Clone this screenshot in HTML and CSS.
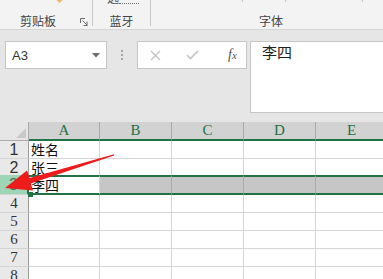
FILE: index.html
```html
<!DOCTYPE html>
<html>
<head>
  <meta name="viewport" content="width=device-width, initial-scale=1.0">
  <link rel="stylesheet" href="styles.css">
</head>
<body>
  <div class="page">
    <div class="ribbon">
      <div class="group g-clip">
        <div class="group-top"><span class="diamond"></span></div>
        <div class="group-foot">
          <span class="label">剪贴板</span>
          <svg class="launcher" width="8" height="8" viewBox="0 0 8 8">
            <path d="M0.5 5V0.5H5" fill="none" stroke="#6b6b6b"/>
            <path d="M2.5 2.5L7 7M7 3.5V7.5M3.5 7.5H7.5" fill="none" stroke="#6b6b6b"/>
          </svg>
        </div>
      </div>
      <div class="group g-bt">
        <div class="group-top peek"><span class="peek-text">选</span><span class="peek-dots"></span></div>
        <div class="group-foot center"><span class="label">蓝牙</span></div>
      </div>
      <div class="group g-font">
        <div class="group-top ticks"><span class="tick t1"></span><span class="tick t2"></span><span class="tick t3"></span></div>
        <div class="group-foot"><span class="label font-label">字体</span></div>
      </div>
    </div>

    <div class="formula-row">
      <div class="namebox">
        <span>A3</span>
        <svg width="8" height="5" viewBox="0 0 8 5"><path d="M0 0H8L4 4.5Z" fill="#6f6f6f"/></svg>
      </div>
      <div class="grip"><span></span><span></span><span></span></div>
      <div class="fx-buttons">
        <svg class="btn-x" width="11" height="11" viewBox="0 0 11 11">
          <path d="M1 1L10 10M10 1L1 10" stroke="#c4c4c4" stroke-width="1.4"/>
        </svg>
        <svg class="btn-ok" width="13" height="10" viewBox="0 0 13 10">
          <path d="M1 5L4.5 8.5L12 1" fill="none" stroke="#c4c4c4" stroke-width="1.6"/>
        </svg>
        <span class="btn-fx"><i>f</i><i class="fx-x">x</i></span>
      </div>
      <div class="formula-box">李四</div>
    </div>

    <div class="sheet">
      <div class="corner"><span class="corner-tri"></span></div>
      <div class="col-head">A</div>
      <div class="col-head">B</div>
      <div class="col-head">C</div>
      <div class="col-head">D</div>
      <div class="col-head">E</div>

      <div class="row-head sans">1</div>
      <div class="cell">姓名</div>
      <div class="cell"></div>
      <div class="cell"></div>
      <div class="cell"></div>
      <div class="cell"></div>

      <div class="row-head sans r2">2</div>
      <div class="cell r2">张三</div>
      <div class="cell r2"></div>
      <div class="cell r2"></div>
      <div class="cell r2"></div>
      <div class="cell r2"></div>

      <div class="row-head sans sel-head">3</div>
      <div class="cell sel active">李四<span class="fill-handle"></span></div>
      <div class="cell sel"></div>
      <div class="cell sel"></div>
      <div class="cell sel"></div>
      <div class="cell sel"></div>

      <div class="row-head">4</div>
      <div class="cell"></div><div class="cell"></div><div class="cell"></div><div class="cell"></div><div class="cell"></div>
      <div class="row-head">5</div>
      <div class="cell"></div><div class="cell"></div><div class="cell"></div><div class="cell"></div><div class="cell"></div>
      <div class="row-head">6</div>
      <div class="cell"></div><div class="cell"></div><div class="cell"></div><div class="cell"></div><div class="cell"></div>
      <div class="row-head">7</div>
      <div class="cell"></div><div class="cell"></div><div class="cell"></div><div class="cell"></div><div class="cell"></div>
      <div class="row-head">8</div>
      <div class="cell"></div><div class="cell"></div><div class="cell"></div><div class="cell"></div><div class="cell"></div>
    </div>

    <!-- annotation arrow drawn over the sheet -->
    <svg class="arrow" width="383" height="279" viewBox="0 0 383 279">
      <polygon points="114,154.3 29.6,177.9 27,170.6 5,188 33,190.6 30.8,183.4 114,155.4" fill="#ee1b1b"/>
    </svg>
  </div>
</body>
</html>
```

FILE: styles.css
```css
* {
  box-sizing: border-box;
}
body {
  margin: 0;
  background: #e6e6e6;
}
.page {
  position: relative;
  width: 383px;
  height: 279px;
  overflow: hidden;
  background: #e6e6e6;
  font-family: "Noto Sans CJK SC", "Liberation Sans", sans-serif;
  color: #222;
}

/* ribbon */
.ribbon {
  display: flex;
  height: 30px;
  background: #f3f3f3;
  border-bottom: 1px solid #d5d5d5;
}
.group {
  height: 26px;
  display: flex;
  flex-direction: column;
  border-right: 1px solid #c8c8c8;
}
.g-clip {
  width: 93px;
}
.g-bt {
  width: 58px;
}
.g-font {
  flex: 1;
  border-right: none;
}
.group-top {
  height: 13px;
  overflow: hidden;
}
.diamond {
  display: block;
  width: 5px;
  height: 5px;
  margin: -3px 0 0 57px;
  background: #f2b866;
  transform: rotate(45deg);
}
.peek {
  display: flex;
  align-items: flex-end;
  height: 5px;
  margin-bottom: 8px;
  padding-left: 14px;
}
.peek-text {
  font-size: 12px;
  line-height: 14px;
  color: #555;
}
.peek-dots {
  width: 20px;
  margin-bottom: 1px;
  border-bottom: 1px dotted #666;
}
.ticks {
  display: flex;
  align-items: flex-start;
}
.tick {
  width: 1px;
  height: 2px;
  background: #c8c8c8;
}
.t1 {
  margin-left: 91px;
}
.t2 {
  margin-left: 42px;
}
.t3 {
  margin-left: 76px;
}
.group-foot {
  display: flex;
  align-items: flex-start;
  height: 13px;
}
.group-foot.center {
  justify-content: center;
}
.label {
  font-size: 12px;
  line-height: 15px;
  color: #444;
}
.g-clip .label {
  margin-left: 20px;
}
.launcher {
  margin-left: auto;
  margin-right: 4px;
  align-self: flex-end;
}
.font-label {
  margin-left: 108px;
}

/* name box + formula bar */
.formula-row {
  display: flex;
  align-items: flex-start;
  height: 92px;
  padding: 11px 0 0 5px;
}
.namebox {
  width: 102px;
  height: 28px;
  display: flex;
  align-items: center;
  justify-content: space-between;
  padding: 0 6px;
  background: #fff;
  border: 1px solid #c6c6c6;
  font-family: "Liberation Sans", sans-serif;
  font-size: 13px;
  color: #333;
}
.grip {
  width: 30px;
  height: 28px;
  display: flex;
  flex-direction: column;
  align-items: center;
  justify-content: center;
  gap: 2px;
}
.grip span {
  width: 2px;
  height: 2px;
  background: #a6a6a6;
}
.fx-buttons {
  width: 110px;
  height: 28px;
  display: flex;
  align-items: center;
  padding-left: 12px;
  background: #fff;
  border: 1px solid #c6c6c6;
}
.btn-ok {
  margin-left: 25px;
}
.btn-fx {
  margin-left: 29px;
  font-family: "Liberation Serif", serif;
  font-size: 14px;
  color: #555;
}
.fx-x {
  font-size: 11px;
}
.formula-box {
  flex: 1;
  height: 72px;
  margin-left: 3px;
  padding-left: 11px;
  background: #fff;
  border: 1px solid #c6c6c6;
  border-right: none;
  font-size: 15px;
  line-height: 20px;
  color: #222;
}

/* sheet grid */
.sheet {
  display: grid;
  grid-template-columns: 29px 71px 72px 72px 72px 72px;
  grid-template-rows: 19px 18px 16px 20px repeat(5, 18px);
  width: 388px;
  background: #fff;
}
.corner {
  position: relative;
  background: #e6e6e6;
  border-right: 1px solid #ababab;
  border-bottom: 1px solid #ababab;
}
.corner-tri {
  position: absolute;
  right: 2px;
  bottom: 2px;
  width: 0;
  height: 0;
  border-left: 10px solid transparent;
  border-bottom: 10px solid #c9c9c9;
}
.col-head {
  background: #d2d2d2;
  border-right: 1px solid #ababab;
  border-bottom: 2px solid #217346;
  text-align: center;
  font-family: "Liberation Serif", serif;
  font-size: 15px;
  line-height: 17px;
  color: #217346;
}
.row-head {
  background: #e9e9e9;
  border-right: 1px solid #9b9b9b;
  border-bottom: 1px solid #d4d4d4;
  text-align: center;
  font-family: "Liberation Serif", serif;
  font-size: 15px;
  line-height: 17px;
  color: #333;
}
.row-head.sans {
  font-family: "Liberation Sans", sans-serif;
  font-size: 16px;
}
.row-head.r2 {
  border-bottom: none;
}
.row-head.sel-head {
  background: #9fd5b7;
  border-right: 2px solid #217346;
  color: #3f7a58;
  line-height: 20px;
}
.cell {
  position: relative;
  border-right: 1px solid #d4d4d4;
  border-bottom: 1px solid #d4d4d4;
  padding-left: 2px;
  font-size: 14px;
  line-height: 17px;
  color: #111;
}
.cell.r2 {
  border-bottom: none;
  line-height: 16px;
}
.cell.sel {
  background: #c6c6c6;
  border-top: 2px solid #217346;
  border-bottom: 2px solid #217346;
  border-right-color: #ababab;
  line-height: 16px;
}
.cell.active {
  background: #fff;
  border-right-color: #d4d4d4;
}
.fill-handle {
  position: absolute;
  left: -1px;
  bottom: -4px;
  width: 5px;
  height: 5px;
  background: #217346;
}
.arrow {
  position: absolute;
  top: 0;
  left: 0;
  pointer-events: none;
}
```
